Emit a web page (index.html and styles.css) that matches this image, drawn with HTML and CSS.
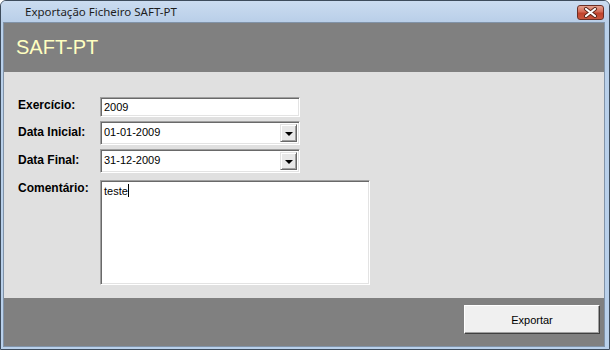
FILE: index.html
```html
<!DOCTYPE html>
<html lang="pt">
<head>
    <meta charset="UTF-8">
    <title>Exportação Ficheiro SAFT-PT</title>
    <link rel="stylesheet" href="styles.css">
</head>
<body>
    <div class="window">
        <!-- Title bar -->
        <div class="titlebar">
            <span class="title">Exportação Ficheiro SAFT-PT</span>
            <div class="close-btn">
                <svg width="15" height="11" viewBox="0 0 15 11">
                    <path d="M3 2 L12 9 M12 2 L3 9" stroke="#5a2418" stroke-width="4" stroke-linecap="round"/>
                    <path d="M3 2 L12 9 M12 2 L3 9" stroke="#ffffff" stroke-width="2.2" stroke-linecap="round"/>
                </svg>
            </div>
        </div>

        <div class="client">
            <div class="banner">SAFT-PT</div>

            <div class="form">
                <div class="row">
                    <span class="label">Exercício:</span>
                    <div class="field text-field">2009</div>
                </div>
                <div class="row combo-row">
                    <span class="label">Data Inicial:</span>
                    <div class="field combo">
                        <span class="value">01-01-2009</span>
                        <span class="drop"><span class="arrow"></span></span>
                    </div>
                </div>
                <div class="row combo-row">
                    <span class="label">Data Final:</span>
                    <div class="field combo">
                        <span class="value">31-12-2009</span>
                        <span class="drop"><span class="arrow"></span></span>
                    </div>
                </div>
                <div class="row memo-row">
                    <span class="label">Comentário:</span>
                    <div class="field memo">teste<span class="caret"></span></div>
                </div>
            </div>

            <div class="footer">
                <div class="btn">Exportar</div>
            </div>
        </div>
    </div>
</body>
</html>
```

FILE: styles.css
```css
html, body {
    margin: 0;
    padding: 0;
    background: #ffffff;
}

/* Outer window frame */
.window {
    width: 610px;
    height: 350px;
    box-sizing: border-box;
    border: 1px solid #3e4c5c;
    border-radius: 6px 6px 0 0;
    background: #b9d0ea;
    padding: 0 5px 3px 3px;
    display: flex;
    flex-direction: column;
    font-family: 'Liberation Sans', Arial, sans-serif;
}

.titlebar {
    height: 22px;
    margin: 0 -5px 0 -3px;
    padding: 0 5px 0 24px;
    display: flex;
    align-items: center;
    justify-content: space-between;
    background: linear-gradient(#cbdcf0, #b8cee8);
    border-radius: 5px 5px 0 0;
}

.title {
    font-family: 'Noto Sans', 'Open Sans', sans-serif;
    font-size: 11.5px;
    color: #1e1e1e;
    padding-bottom: 1px;
}

.close-btn {
    width: 27px;
    height: 15px;
    box-sizing: border-box;
    border: 1px solid #6b2e25;
    border-radius: 3px;
    background: linear-gradient(#e4a08e 0%, #d46a55 45%, #c0432c 55%, #c9573f 100%);
    display: flex;
    align-items: center;
    justify-content: center;
    margin-top: 1px;
}

/* Client area */
.client {
    flex-grow: 1;
    display: flex;
    flex-direction: column;
    box-shadow: 0 0 0 1px #8193a8;
}

.banner {
    height: 49px;
    box-sizing: border-box;
    background: #808080;
    color: #ffffc0;
    font-size: 20px;
    padding: 13px 0 0 12px;
}

.form {
    height: 226px;
    box-sizing: border-box;
    background: #e0e0e0;
    padding: 25px 0 0 14px;
    display: flex;
    flex-direction: column;
}

.row {
    display: flex;
    align-items: flex-start;
    margin-bottom: 4px;
}

.memo-row {
    margin-top: 3px;
}

.label {
    width: 82px;
    font-weight: bold;
    font-size: 12px;
    line-height: 14px;
    color: #000;
    padding-top: 1px;
}

.combo-row .label {
    padding-top: 4px;
}

.memo-row .label {
    padding-top: 1px;
}

.field {
    box-sizing: border-box;
    background: #fff;
    border: 1px solid;
    border-color: #a0a0a0 #ffffff #ffffff #a0a0a0;
    box-shadow: inset 1px 1px 0 #696969, inset -1px -1px 0 #e3e3e3;
    font-size: 11px;
    color: #000;
}

.text-field {
    width: 200px;
    height: 20px;
    line-height: 18px;
    padding-left: 3px;
}

.combo {
    width: 200px;
    height: 24px;
    display: flex;
    align-items: stretch;
    padding: 2px 2px 2px 3px;
}

.combo .value {
    flex-grow: 1;
    line-height: 17px;
}

.drop {
    width: 17px;
    box-sizing: border-box;
    background: #e8e8e8;
    border: 1px solid;
    border-color: #e3e3e3 #696969 #696969 #e3e3e3;
    box-shadow: inset 1px 1px 0 #fff, inset -1px -1px 0 #a0a0a0;
    display: flex;
    align-items: center;
    justify-content: center;
}

.arrow {
    width: 0;
    height: 0;
    border-left: 4px solid transparent;
    border-right: 4px solid transparent;
    border-top: 4px solid #000;
    margin-top: 2px;
}

.memo {
    width: 270px;
    height: 105px;
    padding: 3px 3px;
    line-height: 14px;
}

.caret {
    display: inline-block;
    width: 1px;
    height: 13px;
    background: #000;
    vertical-align: -2px;
}

/* Bottom bar with action button */
.footer {
    flex-grow: 1;
    background: #808080;
    display: flex;
    justify-content: flex-end;
    align-items: flex-start;
    padding: 7px 4px 0 0;
}

.btn {
    width: 136px;
    height: 29px;
    box-sizing: border-box;
    background: #f0f0f0;
    border: 1px solid;
    border-color: #ffffff #404040 #404040 #ffffff;
    box-shadow: inset -1px -1px 0 #a0a0a0;
    font-size: 11px;
    color: #000;
    display: flex;
    align-items: center;
    justify-content: center;
}
```
